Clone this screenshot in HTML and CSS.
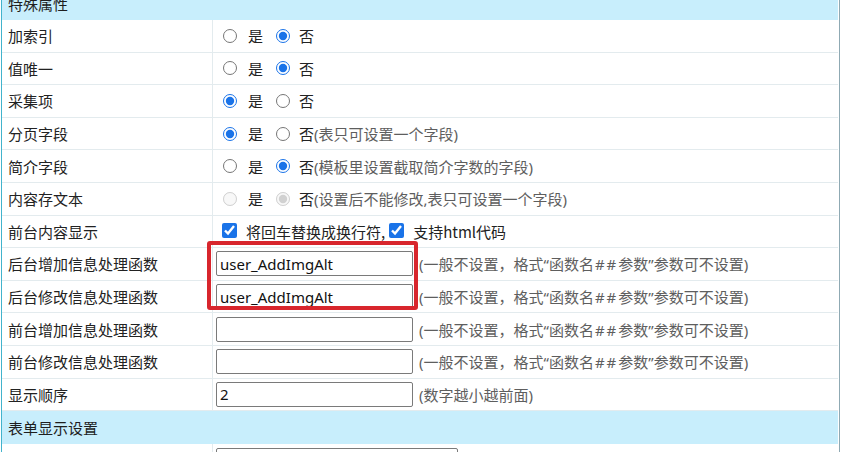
FILE: index.html
```html
<!DOCTYPE html>
<html lang="zh-CN">
<head>
<meta charset="utf-8">
<title>特殊属性</title>
<link rel="stylesheet" href="styles.css">
</head>
<body>
<div class="page">
  <div class="sheet">
    <div class="section">特殊属性</div>

    <div class="row">
      <div class="label">加索引</div>
      <div class="value">
        <input type="radio" name="r1" class="rad"><span class="opt">是</span>
        <input type="radio" name="r1" class="rad" checked><span class="opt2">否</span>
      </div>
    </div>

    <div class="row">
      <div class="label">值唯一</div>
      <div class="value">
        <input type="radio" name="r2" class="rad"><span class="opt">是</span>
        <input type="radio" name="r2" class="rad" checked><span class="opt2">否</span>
      </div>
    </div>

    <div class="row">
      <div class="label">采集项</div>
      <div class="value">
        <input type="radio" name="r3" class="rad" checked><span class="opt">是</span>
        <input type="radio" name="r3" class="rad"><span class="opt2">否</span>
      </div>
    </div>

    <div class="row">
      <div class="label">分页字段</div>
      <div class="value">
        <input type="radio" name="r4" class="rad" checked><span class="opt">是</span>
        <input type="radio" name="r4" class="rad"><span class="opt2">否</span><span class="note">(表只可设置一个字段)</span>
      </div>
    </div>

    <div class="row">
      <div class="label">简介字段</div>
      <div class="value">
        <input type="radio" name="r5" class="rad"><span class="opt">是</span>
        <input type="radio" name="r5" class="rad" checked><span class="opt2">否</span><span class="note">(模板里设置截取简介字数的字段)</span>
      </div>
    </div>

    <div class="row">
      <div class="label">内容存文本</div>
      <div class="value">
        <input type="radio" name="r6" class="rad" disabled><span class="opt">是</span>
        <input type="radio" name="r6" class="rad" checked disabled><span class="opt2">否</span><span class="note">(设置后不能修改,表只可设置一个字段)</span>
      </div>
    </div>

    <div class="row">
      <div class="label">前台内容显示</div>
      <div class="value">
        <input type="checkbox" class="chk" checked><span class="copt">将回车替换成换行符,</span>
        <input type="checkbox" class="chk chk2" checked><span class="copt">支持html代码</span>
      </div>
    </div>

    <div class="row">
      <div class="label">后台增加信息处理函数</div>
      <div class="value">
        <input type="text" class="field" value="user_AddImgAlt"><span class="note note-f">(一般不设置，格式“函数名<span class="hash">##</span>参数”参数可不设置)</span>
      </div>
    </div>

    <div class="row">
      <div class="label">后台修改信息处理函数</div>
      <div class="value">
        <input type="text" class="field" value="user_AddImgAlt"><span class="note note-f">(一般不设置，格式“函数名<span class="hash">##</span>参数”参数可不设置)</span>
      </div>
    </div>

    <div class="row">
      <div class="label">前台增加信息处理函数</div>
      <div class="value">
        <input type="text" class="field" value=""><span class="note note-f">(一般不设置，格式“函数名<span class="hash">##</span>参数”参数可不设置)</span>
      </div>
    </div>

    <div class="row">
      <div class="label">前台修改信息处理函数</div>
      <div class="value">
        <input type="text" class="field" value=""><span class="note note-f">(一般不设置，格式“函数名<span class="hash">##</span>参数”参数可不设置)</span>
      </div>
    </div>

    <div class="row">
      <div class="label">显示顺序</div>
      <div class="value">
        <input type="text" class="field" value="2"><span class="note note-f">(数字越小越前面)</span>
      </div>
    </div>

    <div class="section">表单显示设置</div>

    <div class="row row-last">
      <div class="label"></div>
      <div class="value value-top">
        <input type="text" class="field field-wide" value="">
      </div>
    </div>
  </div>
  <div class="mark"></div>
</div>
</body>
</html>
```

FILE: styles.css
```css
html, body {
  margin: 0;
  padding: 0;
  background: #ffffff;
  overflow: hidden;
}

body {
  font-family: "Noto Sans CJK SC", "Noto Sans", sans-serif;
  font-size: 15px;
  color: #222222;
}

.page {
  position: relative;
  width: 850px;
  height: 452px;
  overflow: hidden;
}

.sheet {
  margin-top: -13px;
  margin-left: 1px;
  width: 836px;
  border-left: 1px solid #42b3cc;
  border-right: 1px solid #8fa9b3;
  padding-right: 1px;
}

.section {
  height: 33px;
  background: #c8eefc;
  display: flex;
  align-items: center;
  padding-left: 6px;
  box-sizing: border-box;
  color: #1e1e1e;
}

.row {
  display: grid;
  grid-template-columns: 211px 1fr;
  height: 32.6px;
  box-sizing: border-box;
  border-bottom: 1px solid #e3ebee;
  background: #ffffff;
}

.row-last {
  height: 40px;
  border-bottom: none;
}

.label {
  display: flex;
  align-items: center;
  padding-left: 6px;
  border-right: 1px solid #e3ebee;
  white-space: nowrap;
}

.value {
  display: flex;
  align-items: center;
  padding-left: 3px;
  white-space: nowrap;
}

.value-top {
  align-items: flex-start;
  padding-top: 4px;
}

.rad {
  width: 14px;
  height: 14px;
  margin: 0 0 0 7px;
  accent-color: #1a73e8;
}

.rad + .opt2 {
  margin-left: 9px;
}

.opt {
  margin-left: 11px;
  margin-right: 6px;
  color: #222222;
}

.opt2 {
  color: #222222;
}

.note {
  color: #5e5e5e;
  font-family: "Noto Sans", "Noto Sans CJK SC", sans-serif;
}

.hash {
  letter-spacing: 2px;
  padding-left: 1px;
}

.note-f {
  margin-left: 6px;
}

.chk {
  width: 15px;
  height: 15px;
  margin: 0 0 2px 6px;
  accent-color: #1a73e8;
}

.chk2 {
  margin-left: 4px;
}

.copt {
  margin-left: 9px;
}

.field {
  width: 197px;
  height: 25px;
  box-sizing: border-box;
  margin: 0;
  padding: 0 3px;
  border: 1px solid #7a7a7a;
  border-radius: 2px;
  font-family: "Noto Sans", "Noto Sans CJK SC", sans-serif;
  font-size: 15px;
  color: #111111;
  background: #ffffff;
}

.field-wide {
  width: 242px;
}

.mark {
  position: absolute;
  left: 207px;
  top: 241px;
  width: 211px;
  height: 69px;
  box-sizing: border-box;
  border: 4px solid #d8262d;
  border-radius: 3px;
}
```
